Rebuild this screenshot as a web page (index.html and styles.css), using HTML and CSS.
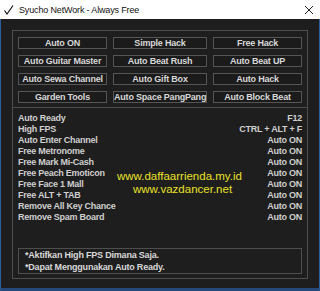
FILE: index.html
```html
<!DOCTYPE html>
<html lang="en">
<head>
    <meta charset="UTF-8">
    <title>Syucho NetWork - Always Free</title>
    <link rel="stylesheet" href="styles.css">
</head>
<body>

<div class="window">
    <div class="titlebar">
        <svg class="check" width="12" height="12" viewBox="0 0 12 12">
            <path d="M1.5 6.5 L4 10 L10 1.5" fill="none" stroke="#111" stroke-width="1.2"/>
        </svg>
        <span class="title">Syucho NetWork - Always Free</span>
        <svg class="close" width="10" height="10" viewBox="0 0 10 10">
            <path d="M1 1 L9 9 M9 1 L1 9" stroke="#222" stroke-width="1"/>
        </svg>
    </div>

    <div class="client">
        <div class="frame">
            <div class="buttons">
                <button>Auto ON</button>
                <button>Simple Hack</button>
                <button>Free Hack</button>
                <button>Auto Guitar Master</button>
                <button>Auto Beat Rush</button>
                <button>Auto Beat UP</button>
                <button>Auto Sewa Channel</button>
                <button>Auto Gift Box</button>
                <button>Auto Hack</button>
                <button>Garden Tools</button>
                <button>Auto Space PangPang</button>
                <button>Auto Block Beat</button>
            </div>

            <ul class="features">
                <li><span>Auto Ready</span><span>F12</span></li>
                <li><span>High FPS</span><span>CTRL + ALT + F</span></li>
                <li><span>Auto Enter Channel</span><span>Auto ON</span></li>
                <li><span>Free Metronome</span><span>Auto ON</span></li>
                <li><span>Free Mark Mi-Cash</span><span>Auto ON</span></li>
                <li><span>Free Peach Emoticon</span><span>Auto ON</span></li>
                <li><span>Free Face 1 Mall</span><span>Auto ON</span></li>
                <li><span>Free ALT + TAB</span><span>Auto ON</span></li>
                <li><span>Remove All Key Chance</span><span>Auto ON</span></li>
                <li><span>Remove Spam Board</span><span>Auto ON</span></li>
            </ul>

            <div class="watermark">
                <div>www.daffaarrienda.my.id</div>
                <div class="second">www.vazdancer.net</div>
            </div>

            <div class="note">
                <p>*Aktifkan High FPS Dimana Saja.</p>
                <p>*Dapat Menggunakan Auto Ready.</p>
            </div>
        </div>
    </div>
</div>

</body>
</html>
```

FILE: styles.css
```css
/* Window */
body {
    margin: 0;
    background: #1e1e1e;
    font-family: 'Liberation Sans', Arial, sans-serif;
}

.window {
    width: 320px;
    height: 291px;
    display: flex;
    flex-direction: column;
}

.titlebar {
    height: 19px;
    background: #ffffff;
    display: flex;
    align-items: center;
    padding: 0 6px 0 3px;
}

.check {
    margin-right: 4px;
}

.title {
    flex: 1;
    font-size: 9px;
    letter-spacing: -0.15px;
    color: #111;
}

.client {
    flex: 1;
    background: #1e1e1e;
    border-left: 1px solid #2c5f99;
    border-right: 1px solid #2c5f99;
    border-bottom: 3px solid #24497a;
    padding: 11px 11px 9px;
    display: flex;
}

.frame {
    position: relative;
    flex: 1;
    border: 1px solid #4e4e4e;
    display: flex;
    flex-direction: column;
}

/* Buttons */
.buttons {
    display: grid;
    grid-template-columns: 89px 94px 89px;
    grid-auto-rows: 12px;
    column-gap: 6px;
    row-gap: 6px;
    padding: 6px 5px 4px;
    border-bottom: 1px solid #4e4e4e;
}

button {
    margin: 0;
    padding: 0;
    background: #1b1b1b;
    border: 1px solid #555;
    color: #d8d8d8;
    font-family: 'Liberation Sans', Arial, sans-serif;
    font-weight: bold;
    font-size: 9px;
    letter-spacing: -0.2px;
    line-height: 10px;
    white-space: nowrap;
}

/* Feature list */
.features {
    list-style: none;
    margin: 0;
    padding: 5px 5px 0;
}

.features li {
    display: flex;
    justify-content: space-between;
    line-height: 11px;
    font-size: 9px;
    font-weight: bold;
    letter-spacing: -0.25px;
    color: #cfcfcf;
}

.watermark {
    position: absolute;
    left: 104px;
    top: 139px;
    font-size: 11.5px;
    line-height: 13px;
    color: #e9e12a;
}

.watermark .second {
    padding-left: 16px;
}

/* Notes */
.note {
    margin: auto 5px 4px;
    border: 1px solid #4e4e4e;
    padding: 0 6px;
}

.note p {
    margin: 0;
    line-height: 12px;
    font-size: 9px;
    font-weight: bold;
    letter-spacing: -0.2px;
    color: #d8d8d8;
}
```
